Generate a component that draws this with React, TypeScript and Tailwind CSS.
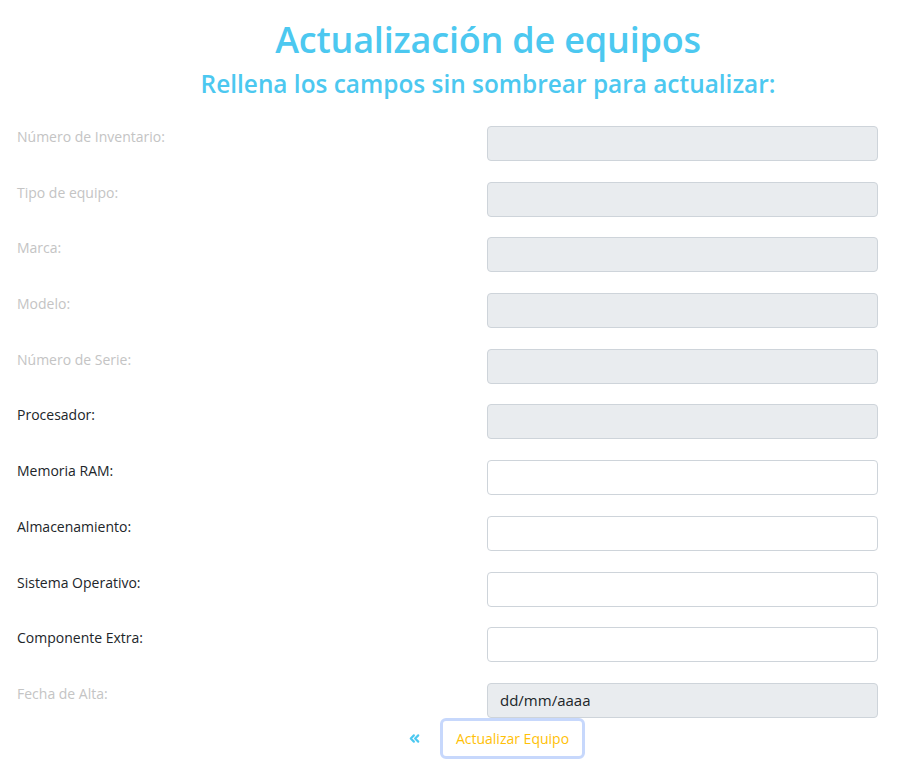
import { ChevronsLeft } from 'lucide-react'

interface Campo {
  label: string
  activo: boolean
  sombreado: boolean
  value?: string
}

const campos: Campo[] = [
  { label: 'Número de Inventario:', activo: false, sombreado: true },
  { label: 'Tipo de equipo:', activo: false, sombreado: true },
  { label: 'Marca:', activo: false, sombreado: true },
  { label: 'Modelo:', activo: false, sombreado: true },
  { label: 'Número de Serie:', activo: false, sombreado: true },
  { label: 'Procesador:', activo: true, sombreado: true },
  { label: 'Memoria RAM:', activo: true, sombreado: false },
  { label: 'Almacenamiento:', activo: true, sombreado: false },
  { label: 'Sistema Operativo:', activo: true, sombreado: false },
  { label: 'Componente Extra:', activo: true, sombreado: false },
  { label: 'Fecha de Alta:', activo: false, sombreado: true, value: 'dd/mm/aaaa' },
]

export default function App() {
  return (
    <div className="min-h-screen bg-white font-['Open_Sans','Noto_Sans',sans-serif]">
      {/* Encabezado */}
      <div className="pl-[74px] pt-[16px] text-center text-[#4cc8f0]">
        <h1 className="text-[36px] leading-[48px] font-semibold tracking-[-0.2px]">Actualización de equipos</h1>
        <h2 className="text-[24.4px] leading-[32px] font-semibold mt-[4px]">Rellena los campos sin sombrear para actualizar:</h2>
      </div>

      {/* Formulario */}
      <div className="mt-[26px] pl-[17px] flex flex-col gap-[20.7px]">
        {campos.map((campo) => (
          <div key={campo.label} className="grid grid-cols-[470px_391px] items-start">
            <label
              className={
                'text-[14px] leading-[20px] pt-[1px] ' +
                (campo.activo ? 'text-[#212529]' : 'text-[#c4c4c4]')
              }
            >
              {campo.label}
            </label>
            <input
              type="text"
              disabled={!campo.activo}
              readOnly={campo.sombreado}
              defaultValue={campo.value}
              className={
                'h-[35px] w-full rounded-[4px] border border-[#ced4da] px-3 text-[15px] text-[#212529] outline-none ' +
                (campo.sombreado ? 'bg-[#e9ecef]' : 'bg-white')
              }
            />
          </div>
        ))}
      </div>

      {/* Acciones */}
      <div className="mt-0 flex items-center justify-center pl-[90px] gap-[18px]">
        <ChevronsLeft className="w-[15px] h-[15px] text-[#4cc8f0]" strokeWidth={3.4} />
        <button className="h-[41px] px-[13px] rounded-[6px] border-[3px] border-[#c7d8fc] bg-white text-[14px] text-[#ffc107]">
          Actualizar Equipo
        </button>
      </div>
    </div>
  )
}
